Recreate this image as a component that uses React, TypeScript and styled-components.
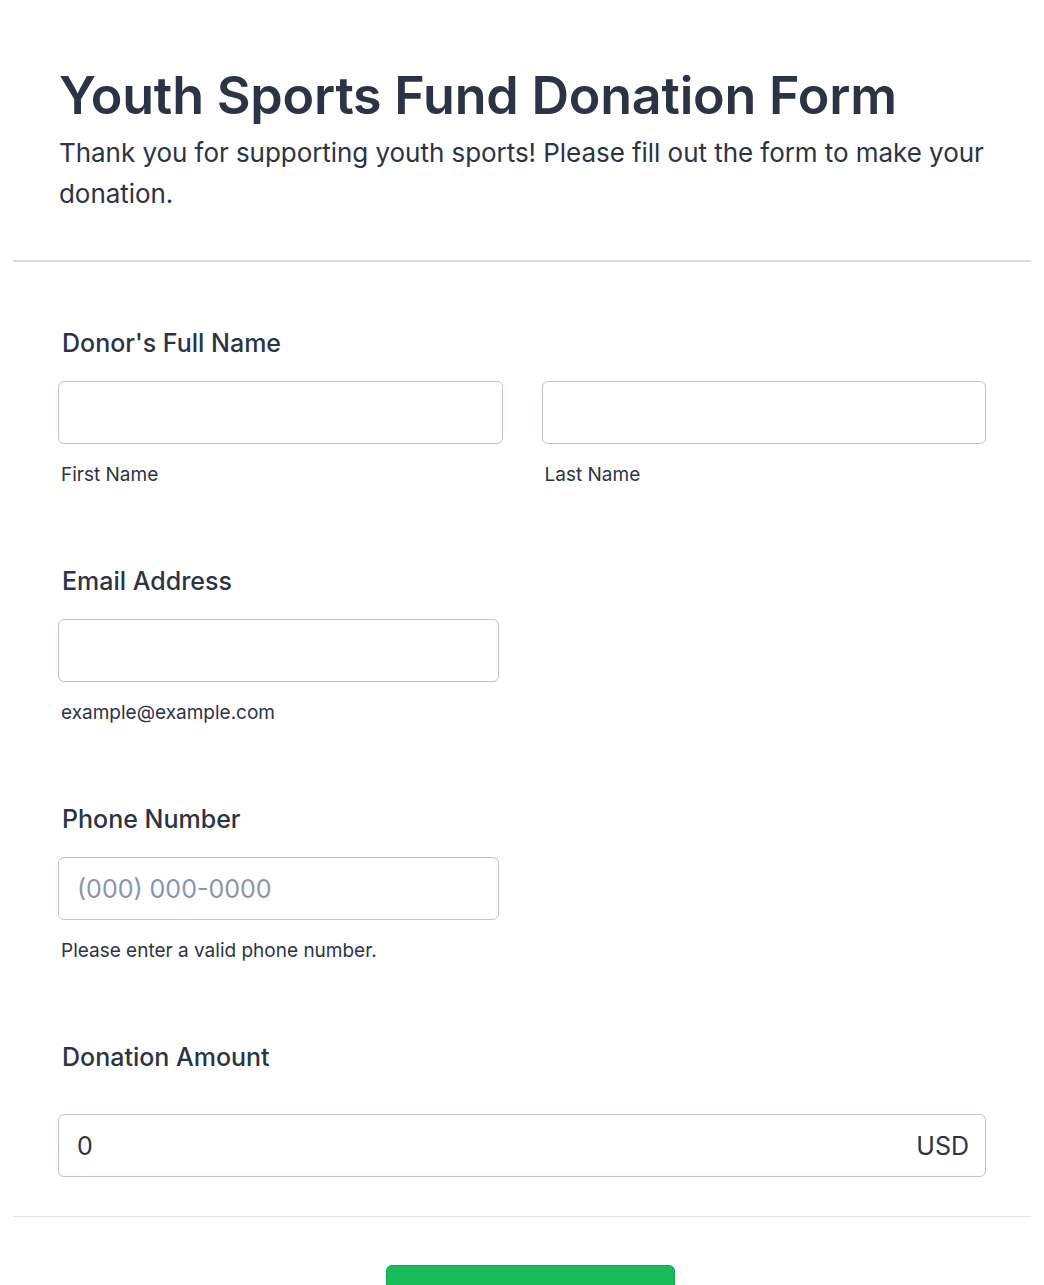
import React from 'react';
import styled, { createGlobalStyle } from 'styled-components';

const GlobalStyle = createGlobalStyle`
  html, body {
    margin: 0;
    padding: 0;
    background: #ffffff;
  }
  body {
    font-family: Inter, "Noto Sans", "Liberation Sans", sans-serif;
    color: #2c3345;
  }
`;

const Page = styled.div`
  padding: 0 13px;
  min-height: 1285px;
  box-sizing: border-box;
`;

const FormCard = styled.form`
  display: flex;
  flex-direction: column;
`;

const Header = styled.div`
  padding: 66px 34px 46px 46px;
  border-bottom: 2px solid #dcdce6;
`;

const Title = styled.h1`
  margin: 0;
  font-size: 52px;
  line-height: 60px;
  font-weight: 600;
  letter-spacing: -0.2px;
  color: #2c3345;
`;

const Subtitle = styled.p`
  margin: 6px 0 0;
  font-size: 26px;
  line-height: 41px;
  font-weight: 400;
  letter-spacing: -0.05px;
  color: #2c3345;
`;

const Fields = styled.div`
  display: flex;
  flex-direction: column;
  gap: 79px;
  padding: 66px 45px 39px;
  border-bottom: 1px solid #e4e4ec;
`;

const Field = styled.div`
  display: flex;
  flex-direction: column;
`;

const Label = styled.label<{ $gap?: number }>`
  display: block;
  padding-left: 4px;
  margin-bottom: ${({ $gap }) => $gap ?? 23}px;
  font-size: 25px;
  line-height: 30px;
  font-weight: 500;
  color: #2c3345;
`;

const Row = styled.div`
  display: grid;
  grid-template-columns: 1fr 1fr;
  column-gap: 39px;
`;

const Cell = styled.div<{ $width?: number }>`
  display: flex;
  flex-direction: column;
  width: ${({ $width }) => ($width ? `${$width}px` : 'auto')};
`;

const TextInput = styled.input`
  box-sizing: border-box;
  width: 100%;
  height: 63px;
  padding: 0 18px;
  border: 1px solid #bcc3d1;
  border-radius: 6px;
  background: #ffffff;
  font-family: inherit;
  font-size: 25px;
  color: #2c3345;
  outline: none;

  &::placeholder {
    color: #8796ad;
  }
`;

const SubLabel = styled.span`
  display: block;
  margin-top: 19px;
  padding-left: 3px;
  font-size: 19px;
  line-height: 24px;
  color: #2c3345;
`;

const AmountBox = styled.div`
  box-sizing: border-box;
  display: flex;
  align-items: center;
  height: 63px;
  padding: 0 16px 0 18px;
  border: 1px solid #bcc3d1;
  border-radius: 6px;
`;

const AmountInput = styled.input`
  flex: 1;
  min-width: 0;
  border: none;
  outline: none;
  padding: 0;
  font-family: inherit;
  font-size: 25px;
  color: #2c3345;
  background: transparent;
`;

const Currency = styled.span`
  font-size: 25px;
  color: #2c3345;
`;

const Footer = styled.div`
  display: flex;
  justify-content: center;
  padding: 48px 0 0 16px;
`;

const SubmitButton = styled.button`
  width: 289px;
  height: 60px;
  border: 1px solid #12a84f;
  border-radius: 6px;
  background: #18bd5b;
  color: #ffffff;
  font-family: inherit;
  font-size: 24px;
  font-weight: 600;
`;

export default function App() {
  return (
    <Page>
      <GlobalStyle />
      <FormCard onSubmit={(e) => e.preventDefault()}>
        <Header>
          <Title>Youth Sports Fund Donation Form</Title>
          <Subtitle>
            Thank you for supporting youth sports! Please fill out the form to make your donation.
          </Subtitle>
        </Header>

        <Fields>
          <Field>
            <Label>Donor's Full Name</Label>
            <Row>
              <Cell>
                <TextInput type="text" aria-label="First Name" />
                <SubLabel>First Name</SubLabel>
              </Cell>
              <Cell>
                <TextInput type="text" aria-label="Last Name" />
                <SubLabel>Last Name</SubLabel>
              </Cell>
            </Row>
          </Field>

          <Field>
            <Label>Email Address</Label>
            <Cell $width={441}>
              <TextInput type="email" aria-label="Email Address" />
              <SubLabel>example@example.com</SubLabel>
            </Cell>
          </Field>

          <Field>
            <Label>Phone Number</Label>
            <Cell $width={441}>
              <TextInput type="tel" placeholder="(000) 000-0000" aria-label="Phone Number" />
              <SubLabel>Please enter a valid phone number.</SubLabel>
            </Cell>
          </Field>

          <Field>
            <Label $gap={42}>Donation Amount</Label>
            <AmountBox>
              <AmountInput type="text" defaultValue="0" aria-label="Donation Amount" />
              <Currency>USD</Currency>
            </AmountBox>
          </Field>
        </Fields>

        <Footer>
          <SubmitButton type="submit" />
        </Footer>
      </FormCard>
    </Page>
  );
}
